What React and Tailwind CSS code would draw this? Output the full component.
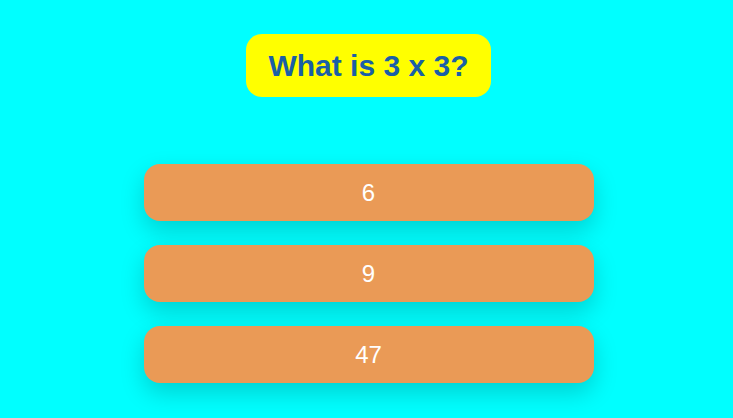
export default function App() {
  const answers = ["6", "9", "47"];
  return (
    <div className="min-h-[418px] bg-[#00ffff] pl-[4px] pt-[34px] font-['Liberation_Sans',Arial,sans-serif]">
      <div className="flex justify-center">
        <div className="flex h-[63px] w-[245px] items-center justify-center rounded-2xl bg-[#ffff00] text-[30px] font-bold text-[#1a5fa6]">
          What is 3 x 3?
        </div>
      </div>
      <div className="mx-auto mt-[67px] flex w-[450px] flex-col gap-6">
        {answers.map((a) => (
          <button
            key={a}
            type="button"
            className="flex h-[57px] items-center justify-center rounded-2xl bg-[#ea9a56] text-[24px] text-white shadow-[0_10px_24px_rgba(0,0,0,0.18)]"
          >
            {a}
          </button>
        ))}
      </div>
    </div>
  );
}
